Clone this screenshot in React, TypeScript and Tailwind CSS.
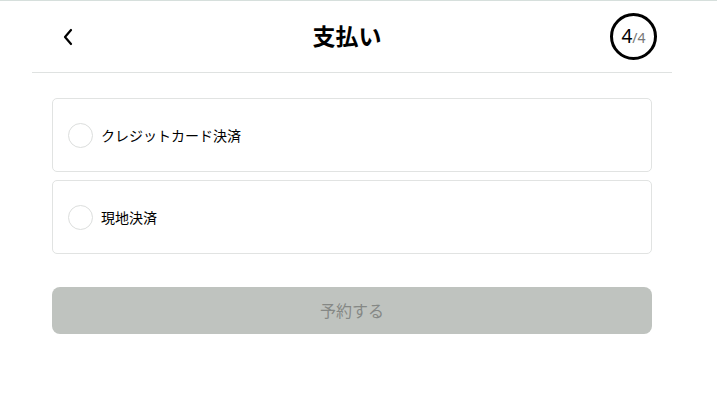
import React, { useState } from "react";

const options = ["クレジットカード決済", "現地決済"];

const App = () => {
  const [selected, setSelected] = useState<number | null>(null);

  return (
    <div
      className="w-[717px] h-[413px] bg-white border-t border-[#d6dfdc] text-black"
      style={{ fontFamily: '"Noto Sans", "Noto Sans CJK JP", sans-serif' }}
    >
      <div className="w-[704px]">
        <div className="mx-[32px] h-[72px] border-b border-[#dfe2e1] flex items-center justify-between pl-[26px] pr-[15px]">
          <button className="w-[20px] h-[20px] flex items-center justify-center">
            <svg width="12" height="18" viewBox="0 0 12 18" fill="none">
              <path d="M9 2 L3 9 L9 16" stroke="#000" strokeWidth="2.2" strokeLinecap="round" strokeLinejoin="round" />
            </svg>
          </button>
          <h1 className="text-[23px] font-bold leading-none ml-[6px]">支払い</h1>
          <div className="w-[47px] h-[47px] rounded-full border-[3px] border-black flex items-center justify-center">
            <span className="text-[19px] leading-none">4</span>
            <span className="text-[14px] leading-none text-[#777] mt-[3px]">/4</span>
          </div>
        </div>

        <div className="px-[52px] pt-[25px] flex flex-col gap-[8px]">
          {options.map((o, i) => (
            <label
              key={o}
              onClick={() => setSelected(i)}
              className="h-[74px] border border-[#e1e3e2] rounded-[5px] flex items-center pl-[15px] gap-[8px] cursor-pointer"
            >
              <span className="w-[25px] h-[25px] rounded-full border border-[#dcdedd] flex items-center justify-center">
                {selected === i && <span className="w-[13px] h-[13px] rounded-full bg-black" />}
              </span>
              <span className="text-[14px]">{o}</span>
            </label>
          ))}

          <button className="mt-[25px] h-[47px] rounded-[8px] bg-[#bfc3bf] text-[#858885] text-[16px]">
            予約する
          </button>
        </div>
      </div>
    </div>
  );
};

export default App;
